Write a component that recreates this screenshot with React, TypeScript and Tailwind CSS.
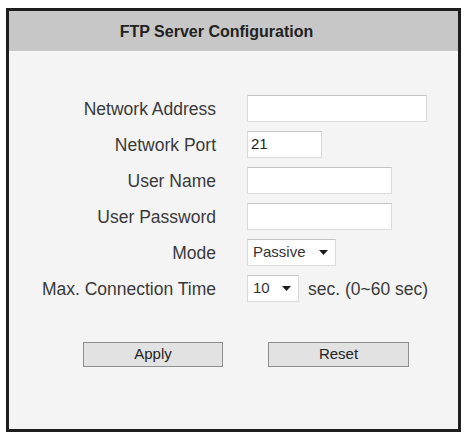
import type { ReactNode } from "react";

function Caret() {
  return (
    <svg width="9" height="5" viewBox="0 0 9 5" className="shrink-0">
      <path d="M0 0H9L4.5 5Z" fill="#1a1a1a" />
    </svg>
  );
}

function Row({ label, children }: { label: string; children: ReactNode }) {
  return (
    <div className="flex items-center h-[27px]">
      <div className="w-[208px] pr-px text-right text-[17.5px] text-[#3a3a3a] leading-none pt-[2px]">
        {label}
      </div>
      <div className="ml-[30px] flex items-center h-full">{children}</div>
    </div>
  );
}

function TextBox({ width, value }: { width: string; value?: string }) {
  return (
    <div
      className={`${width} h-[27px] bg-white border border-[#dadada] border-t-[#c4c4c4] flex items-center pl-[3px] text-[15px] text-[#222]`}
    >
      {value}
    </div>
  );
}

export default function App() {
  return (
    <main
      className="w-[464px] h-[434px] bg-white pt-[8px] pl-[6px]"
      style={{ fontFamily: '"Liberation Sans", Arial, sans-serif' }}
    >
      <div className="w-[455px] h-[424px] border-[3px] border-[#1e1e1e] bg-[#f4f4f4] flex flex-col">
        <header className="h-[40px] bg-[#c7c7c7] flex items-center justify-center pr-[34px]">
          <h1 className="text-[16px] font-bold text-[#222] pt-px">
            FTP Server Configuration
          </h1>
        </header>

        <section className="mt-[44px] flex flex-col gap-[9px]">
          <Row label="Network Address">
            <TextBox width="w-[180px]" />
          </Row>
          <Row label="Network Port">
            <TextBox width="w-[75px]" value="21" />
          </Row>
          <Row label="User Name">
            <TextBox width="w-[145px]" />
          </Row>
          <Row label="User Password">
            <TextBox width="w-[145px]" />
          </Row>
          <Row label="Mode">
            <div className="w-[89px] h-[27px] bg-white border border-[#dadada] border-t-[#c4c4c4] flex items-center justify-between pl-[5px] pr-[7px] text-[15px] text-[#333]">
              <span>Passive</span>
              <Caret />
            </div>
          </Row>
          <Row label="Max. Connection Time">
            <div className="w-[52px] h-[27px] bg-white border border-[#dadada] border-t-[#c4c4c4] flex items-center justify-between pl-[5px] pr-[7px] text-[15px] text-[#333]">
              <span>10</span>
              <Caret />
            </div>
            <span className="ml-[9px] text-[17.5px] text-[#3a3a3a] pt-[2px]">
              sec. (0~60 sec)
            </span>
          </Row>
        </section>

        <div className="mt-[40px] flex pl-[74px] gap-[45px]">
          <button className="w-[140px] h-[25px] bg-[#e2e2e2] border border-[#8e8e8e] text-[15px] text-[#222]">
            Apply
          </button>
          <button className="w-[141px] h-[25px] bg-[#e2e2e2] border border-[#8e8e8e] text-[15px] text-[#222]">
            Reset
          </button>
        </div>
      </div>
    </main>
  );
}
